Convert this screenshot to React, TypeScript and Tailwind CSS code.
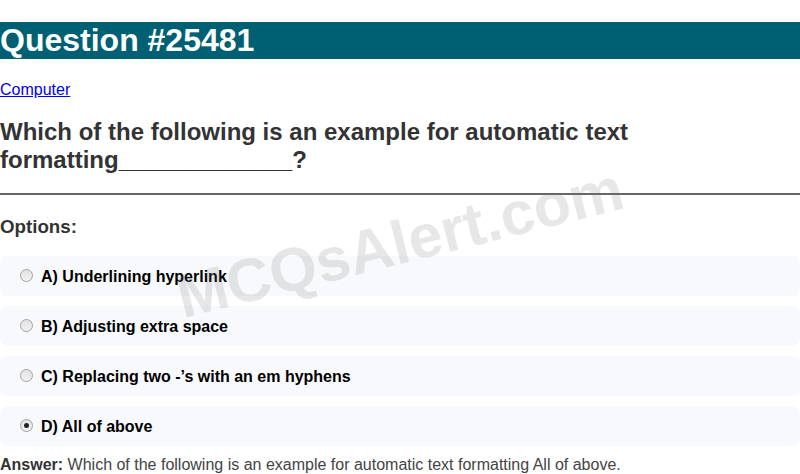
import React from "react";

const options = [
  { label: "A) Underlining hyperlink", checked: false },
  { label: "B) Adjusting extra space", checked: false },
  { label: "C) Replacing two -’s with an em hyphens", checked: false },
  { label: "D) All of above", checked: true },
];

function Radio({ checked }: { checked: boolean }) {
  return (
    <span className="relative mr-[8px] inline-flex h-[13px] w-[13px] shrink-0 items-center justify-center rounded-full border border-[#a3a3a3] bg-[linear-gradient(#e2e2e2,#f2f2f2)]">
      {checked && <span className="h-[5px] w-[5px] rounded-full bg-[#222]" />}
    </span>
  );
}

export default function App() {
  return (
    <div className="relative min-h-[474px] overflow-hidden bg-white font-['Liberation_Sans',Arial,sans-serif] text-[16px] text-[#333]">
      <h1 className="mt-[22px] bg-[#006073] text-[32px] font-bold leading-[36.8px] text-white">
        Question #25481
      </h1>
      <div className="mt-[22px] leading-[18.4px]">
        <a href="#" className="text-[#0000ee] underline">
          Computer
        </a>
      </div>
      <h2 className="mt-[19px] text-[24px] font-bold leading-[27.6px] text-[#333]">
        Which of the following is an example for automatic text formatting_____________?
      </h2>
      <hr className="mt-[20px] border-t-2 border-[#666]" />
      <h3 className="mt-[21px] text-[18.72px] font-bold leading-[21.5px] text-[#333]">
        Options:
      </h3>
      <div className="mt-[18px] flex flex-col gap-[10px]">
        {options.map((o) => (
          <div
            key={o.label}
            className="flex h-[40px] items-center rounded-[8px] bg-[#f8f9fc] pl-[20px] text-[16px] font-bold text-black"
          >
            <Radio checked={o.checked} />
            <span className="relative top-[1px]">{o.label}</span>
          </div>
        ))}
      </div>
      <p className="mt-[10px] leading-[18.4px] text-[#444]">
        <b className="text-[#333]">Answer:</b> Which of the following is an example for automatic text formatting All of above.
      </p>
      <div className="pointer-events-none absolute left-[400px] top-[243px] -translate-x-1/2 -translate-y-1/2 -rotate-[14deg] whitespace-nowrap text-[61px] font-bold leading-none text-[rgba(120,120,120,0.18)]">
        MCQsAlert.com
      </div>
    </div>
  );
}
